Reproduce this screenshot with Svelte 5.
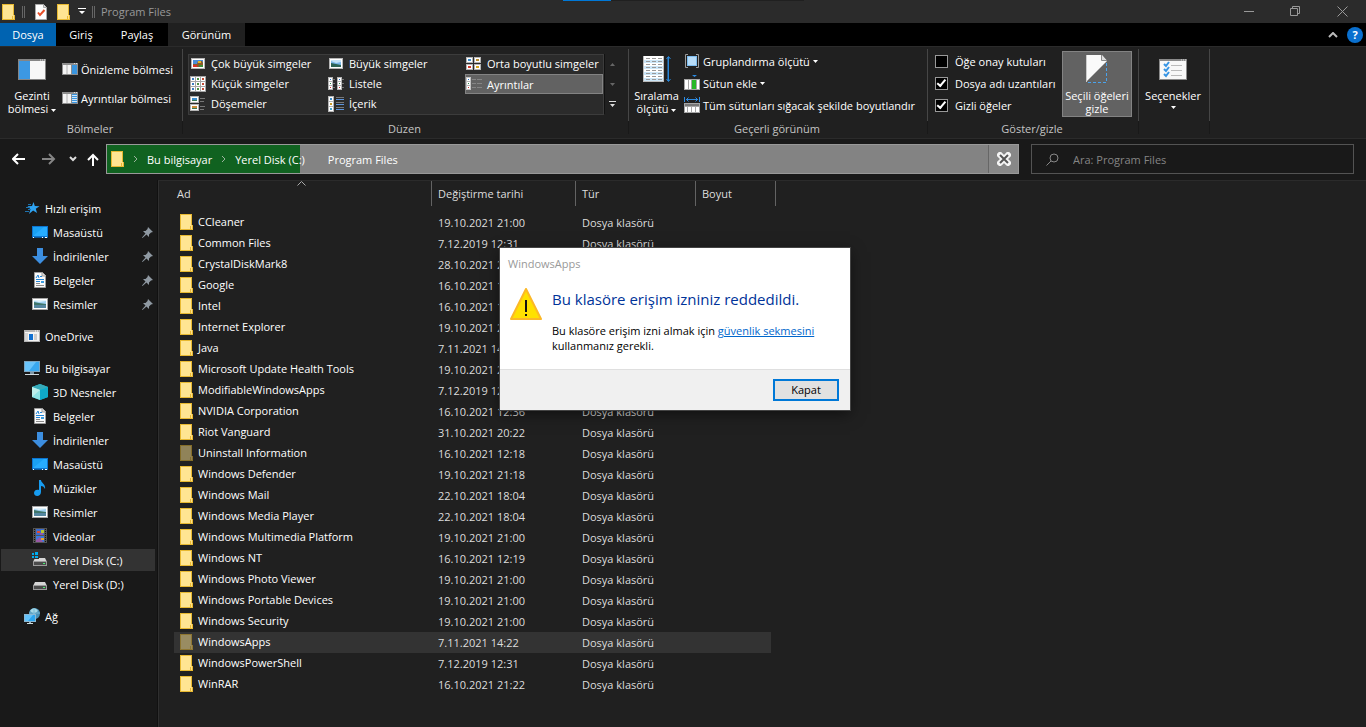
<script>
    let itemChecks = $state(false);
    let extensions = $state(true);
    let hiddenItems = $state(true);
    let progress = $state(21.2);
    let search = $state('');

    const layouts = [
        { icon: 'xlarge', label: 'Çok büyük simgeler' },
        { icon: 'large', label: 'Büyük simgeler' },
        { icon: 'medium', label: 'Orta boyutlu simgeler' },
        { icon: 'small', label: 'Küçük simgeler' },
        { icon: 'list', label: 'Listele' },
        { icon: 'details', label: 'Ayrıntılar', active: true },
        { icon: 'tiles', label: 'Döşemeler' },
        { icon: 'content', label: 'İçerik' }
    ];

    const tree = [
        [
            { icon: 'star', label: 'Hızlı erişim', root: true },
            { icon: 'desktop', label: 'Masaüstü', pin: true },
            { icon: 'download', label: 'İndirilenler', pin: true },
            { icon: 'document', label: 'Belgeler', pin: true },
            { icon: 'picture', label: 'Resimler', pin: true }
        ],
        [{ icon: 'onedrive', label: 'OneDrive', root: true }],
        [
            { icon: 'pc', label: 'Bu bilgisayar', root: true },
            { icon: 'cube', label: '3D Nesneler' },
            { icon: 'document', label: 'Belgeler' },
            { icon: 'download', label: 'İndirilenler' },
            { icon: 'desktop', label: 'Masaüstü' },
            { icon: 'music', label: 'Müzikler' },
            { icon: 'picture', label: 'Resimler' },
            { icon: 'video', label: 'Videolar' },
            { icon: 'diskc', label: 'Yerel Disk (C:)', selected: true },
            { icon: 'diskd', label: 'Yerel Disk (D:)' }
        ],
        [{ icon: 'network', label: 'Ağ', root: true }]
    ];

    const files = [
        { name: 'CCleaner', date: '19.10.2021 21:00' },
        { name: 'Common Files', date: '7.12.2019 12:31' },
        { name: 'CrystalDiskMark8', date: '28.10.2021 21:03' },
        { name: 'Google', date: '16.10.2021 12:46' },
        { name: 'Intel', date: '16.10.2021 12:31' },
        { name: 'Internet Explorer', date: '19.10.2021 21:18' },
        { name: 'Java', date: '7.11.2021 14:10' },
        { name: 'Microsoft Update Health Tools', date: '19.10.2021 20:44' },
        { name: 'ModifiableWindowsApps', date: '7.12.2019 12:14' },
        { name: 'NVIDIA Corporation', date: '16.10.2021 12:36' },
        { name: 'Riot Vanguard', date: '31.10.2021 20:22' },
        { name: 'Uninstall Information', date: '16.10.2021 12:18', hidden: true },
        { name: 'Windows Defender', date: '19.10.2021 21:18' },
        { name: 'Windows Mail', date: '22.10.2021 18:04' },
        { name: 'Windows Media Player', date: '22.10.2021 18:04' },
        { name: 'Windows Multimedia Platform', date: '19.10.2021 21:00' },
        { name: 'Windows NT', date: '16.10.2021 12:19' },
        { name: 'Windows Photo Viewer', date: '19.10.2021 21:00' },
        { name: 'Windows Portable Devices', date: '19.10.2021 21:00' },
        { name: 'Windows Security', date: '19.10.2021 21:00' },
        { name: 'WindowsApps', date: '7.11.2021 14:22', hidden: true, selected: true },
        { name: 'WindowsPowerShell', date: '7.12.2019 12:31' },
        { name: 'WinRAR', date: '16.10.2021 21:22' }
    ];
</script>

{#snippet folder()}
    <svg class="folder" width="14" height="16" viewBox="0 0 14 16" aria-hidden="true">
        <path d="M0 0h12v11h1v5H0z" fill="#e8b931" />
        <path d="M1 1h10v14H1z" fill="#ffe592" />
        <path d="M11 11h1v4h-2v-3z" fill="#ffe08a" />
        <path d="M10.5 12v3" stroke="#e8b931" />
    </svg>
{/snippet}

{#snippet arrow()}
    <svg class="caret" width="5" height="3" viewBox="0 0 5 3" aria-hidden="true"><path d="M0 0h5L2.5 3z" fill="currentColor" /></svg>
{/snippet}

{#snippet thumb(x, y, c)}
    <rect {x} {y} width="5" height="5" fill="#fff" stroke="#a5a5a5" />
    <rect x={x + 1.5} y={y + 1.5} width="2" height="2" fill={c} />
{/snippet}

{#snippet icon(name)}
    <svg width="16" height="16" viewBox="0 0 16 16" aria-hidden="true">
        {#if name === 'xlarge'}
            <rect x="1.5" y="2.5" width="13" height="10" fill="#fff" stroke="#b5b5b5" />
            <path d="M3 4h10v7H3z" fill="#4c8fd8" />
            <path d="M3 8h4l1-3h4l1 2v4H3z" fill="#8a5a28" />
            <path d="M3 9h4v2H3z" fill="#d93025" /><path d="M8 5h3v2H8z" fill="#e6b422" /><path d="M9 9h4v2H9z" fill="#3d8b37" />
        {:else if name === 'large'}
            <rect x="1.5" y="2.5" width="13" height="10" fill="#fff" stroke="#b5b5b5" />
            <path d="M3 4h10v7H3z" fill="#79b6ea" /><path d="M3 4h10v2L8 7 3 5z" fill="#c6e4f7" />
            <path d="M3 7l5 1 5 1v2H3z" fill="#2b6456" />
        {:else if name === 'medium'}
            {#each [[0, 1, '#3c8fd0'], [8, 1, '#b98f32'], [0, 8, '#d53a2b'], [8, 8, '#d6a51d']] as [x, y, c]}
                <rect x={x + 0.5} y={y + 0.5} width="6" height="5" fill="#fff" stroke="#b5b5b5" />
                <rect x={x + 2} y={y + 2} width="3" height="2" fill={c} />
            {/each}
        {:else if name === 'small'}
            {#each [0, 5, 10] as y}
                {@render thumb(0.5, y + 0.5, '#3c7cc0')}
                {@render thumb(5.5, y + 0.5, '#4b8f43')}
                {@render thumb(10.5, y + 0.5, '#c04b35')}
            {/each}
        {:else if name === 'list'}
            {#each [0, 9] as x}
                <rect x={x + 0.5} y="1.5" width="4" height="12" fill="#fff" stroke="#b5b5b5" />
                <path d="M{x + 1} 5.5h3M{x + 1} 9.5h3" stroke="#b5b5b5" />
                <path d="M{x + 2} 3h1v1h-1z" fill="#2975c9" /><path d="M{x + 2} 7h1v1h-1z" fill="#2b8547" /><path d="M{x + 2} 11h1v1h-1z" fill="#cf3030" />
                <path d="M{x + 5} 3.5h2M{x + 5} 7.5h2M{x + 5} 11.5h2" stroke="#777" />
            {/each}
        {:else if name === 'details'}
            <rect x="0.5" y="1.5" width="4" height="12" fill="#fff" stroke="#c4c4c4" />
            <path d="M1 5.5h3M1 9.5h3" stroke="#b5b5b5" />
            <path d="M2 3h1v1H2z" fill="#2975c9" /><path d="M2 7h1v1H2z" fill="#2b8547" /><path d="M2 11h1v1H2z" fill="#cf3030" />
            <path d="M6 3.5h4m1 0h5M6 7.5h4m1 0h5M6 11.5h4m1 0h5" stroke="#858585" />
        {:else if name === 'tiles'}
            {#each [[0, '#3f8fcd'], [8, '#c98b39']] as [y, c]}
                <rect x="0.5" y={y + 0.5} width="8" height="6" fill="#fff" stroke="#b5b5b5" />
                <rect x="2" y={y + 2} width="5" height="3" fill={c} /><rect x="2" y={y + 4} width="5" height="1" fill="#3a7a54" />
                <path d="M10 {y + 2.5}h5M10 {y + 5.5}h4" stroke="#777" />
            {/each}
        {:else if name === 'content'}
            {#each [[0, '#3f8fcd'], [5, '#c9992a'], [10, '#4aa2cb']] as [y, c]}
                <rect x="0.5" y={y + 0.5} width="5" height="5" fill="#fff" stroke="#b5b5b5" />
                <rect x="2" y={y + 2} width="2" height="2" fill={c} />
                <path d="M8 {y + 1.5}h8" stroke="#777" /><path d="M8 {y + 3.5}h8" stroke="#5b93dc" />
            {/each}
        {:else if name === 'preview' || name === 'detailpane'}
            <path d="M0 2h16v12H0z" fill="#8d8d8d" /><path d="M1 4h8v9H1z" fill="#f4f4f4" />
            <path d="M5 4v9" stroke="#b0b0b0" />
            <path d="M10 4h5v9h-5z" fill="#3995df" />
            <path d="M12 2.5h1m1 0h1" stroke="#ddd" />
            {#if name === 'detailpane'}<path d="M10 5.5h5M10 7.5h5M10 9.5h5M10 11.5h5" stroke="#cfe7fb" />{/if}
        {:else if name === 'group'}
            <path d="M4 1.5H1.5v13H4M12 1.5h2.5v13H12" fill="none" stroke="#9b9b9b" />
            <rect x="3.5" y="3.5" width="9" height="9" fill="#b7dcf8" stroke="#7dbcef" />
        {:else if name === 'addcol'}
            <path d="M8 0h5l-2.5 2z" fill="#2d8be0" />
            <path d="M0 4h16v11H0z" fill="#a6a6a6" /><path d="M1 5h3v9H1zM5 5h2v9H5zM13 5h2v9h-2z" fill="#fff" /><path d="M8 5h4v9H8z" fill="#28b828" />
        {:else if name === 'fit'}
            <path d="M.5 0v5M15.5 0v5M2 2.5h12M4.500 .5l-2 2 2 2M11.500 .5l2 2-2 2" fill="none" stroke="#2d8be0" />
            <path d="M0 6h16v10H0z" fill="#a6a6a6" />
            <path d="M1 8h14" stroke="#777" stroke-width="2" /><path d="M1 10h2v5H1zM4 10h3v5H4zM8 10h3v5H8zM12 10h3v5h-3z" fill="#fff" />
        {:else if name === 'star'}
            <path d="M9.500 2l1.300 4 4.700.2-3.700 2.600L13 13l-3.900-2.400L5 14l1.500-4.800L3.500 6.200 8 6z" fill="#2ea3f2" />
            <path d="M4 4.500h3M2 7.500h4M4 9.500h3M1 11.500h4" stroke="#1d73b0" />
        {:else if name === 'desktop'}
            <path d="M0 2h16v12H0z" fill="#0d74cf" /><path d="M1 3h14v9H1z" fill="#1aa1f4" /><path d="M1 12L12 3h3v9z" fill="#27acff" />
            <path d="M0 13.5h16" stroke="#0a5596" /><path d="M1 13.5h1m8 0h1m2 0h2" stroke="#fff" />
        {:else if name === 'download'}
            <path d="M5 0h6v8h5l-8 8-8-8h5z" fill="#3c8ee0" />
        {:else if name === 'document'}
            <path d="M2.5.5h8l3 3v12h-11z" fill="#fafafa" stroke="#9d9d9d" /><path d="M10 .5v3.500h4" fill="#ddd" stroke="#9d9d9d" />
            <path d="M4 6l2-3 1 3M8 4.500h2M4 7.500h8M4 9.500h4" stroke="#2185d8" fill="none" /><path d="M9 9h3v2H9z" fill="#3a9ce0" /><path d="M4 11.500h4M4 13.500h8" stroke="#8a8a8a" />
        {:else if name === 'picture'}
            <path d="M0 2h16v12H0z" fill="#a5a5a5" /><path d="M1 3h14v10H1z" fill="#fff" />
            <path d="M2 4h12v8H2z" fill="#9fd1f1" /><path d="M2 6l5 1 7 1v2H2z" fill="#40766b" /><path d="M2 9h12v3H2z" fill="#5587a1" /><path d="M2 4h12v1L7 6 2 5z" fill="#e3f3fb" />
        {:else if name === 'onedrive'}
            <path d="M0 2h16v12H0z" fill="#b5b5b5" /><path d="M1 4h14v9H1z" fill="#f4f4f4" /><path d="M5 6h4v6H5z" fill="#0f6fd0" /><path d="M10 7h3M10 9h3M10 11h3" stroke="#a5a5a5" /><path d="M1 5h3v8H1z" fill="#d5d5d5" /><path d="M11 3h1m1 0h1" stroke="#fff" />
        {:else if name === 'pc'}
            <path d="M0 1h16v11H0z" fill="#7da5c0" /><path d="M1 2h14v9H1z" fill="#39a8f0" /><path d="M1 2h11L5 11H1z" fill="#69c4fb" />
            <path d="M6 12h4v2H6z" fill="#7c95a5" /><path d="M1 14.500h14" stroke="#cfd9df" />
        {:else if name === 'cube'}
            <path d="M8 0l8 3v10l-8 3-8-3V3z" fill="#22bbd0" /><path d="M8 0l8 3-8 3-8-3z" fill="#36aab9" /><path d="M0 3l8 3v10l-8-3z" fill="#8ee3e4" /><path d="M8 6l8-3v10l-8 3z" fill="#0fa9c8" /><path d="M0 3l8 3-8 7z" fill="#bdeeea" />
        {:else if name === 'music'}
            <path d="M7 0h2c0 3 5 4 4 9-1-2-2-3-4-3v6c0 5-7 5-7 1 0-3 3-4 5-3z" fill="#179cf0" />
        {:else if name === 'video'}
            <path d="M1 0h14v15H1z" fill="#555" /><path d="M4 1h8v6H4z" fill="#3a6cd0" /><path d="M4 8h8v6H4z" fill="#3a79dc" />
            <path d="M5 3h3v2H5z" fill="#e04a30" /><path d="M9 2h3v3H9z" fill="#b9c630" /><path d="M8 5h3v2H8zM4 12l4-3 3 5H4z" fill="#9858a5" /><path d="M9 10h3v2H9z" fill="#e5a42f" />
            <path d="M2.500 1v13M13.500 1v13" stroke="#111" stroke-dasharray="1 1" />
        {:else if name === 'diskc' || name === 'diskd'}
            <path d="M3 6h10l2 4H1z" fill="#d5d5d5" /><path d="M1 9h14v5H1z" fill="#9a9a9a" /><path d="M2 10h12v3H2z" fill="#4a4a4a" /><path d="M11 11.500h2" stroke="#48f070" />
            {#if name === 'diskc'}<path d="M0 0h7v7H0z" fill="#333" /><path d="M0 1h2v2H0zM3 0h3v3H3zM0 4h2v2H0zM3 4h3v2H3z" fill="#00adef" />{/if}
        {:else if name === 'network'}
            <circle cx="10.500" cy="5.500" r="5.500" fill="#4a92b8" /><path d="M6 3c3-4 6-3 8 0L10 6z" fill="#a6d8e7" /><path d="M10 0v11M5 5h11" stroke="#79b8d4" />
            <path d="M0 6h12v8H0z" fill="#8ab8d4" /><path d="M1 7h10v6H1z" fill="#2ba4ee" /><path d="M1 7h8l-5 6H1z" fill="#63c2fa" /><path d="M5 14h2v1H5z" fill="#9ab" /><path d="M3 15.500h6" stroke="#cdd" />
        {/if}
    </svg>
{/snippet}

<div class="window">
    <header class="titlebar">
        {@render folder()}
        <span class="grip"></span>
        <svg class="props" width="12" height="16" viewBox="0 0 12 16" aria-hidden="true">
            <path d="M.5.5h8l3 3v12H.5z" fill="#fff" stroke="#aaa" /><path d="M8.500.5v3h3" fill="#ddd" stroke="#aaa" />
            <path d="M3 8.500l2 2.500 4.500-5" fill="none" stroke="#e8502a" stroke-width="2" />
        </svg>
        {@render folder()}
        <svg class="quick" width="8" height="7" viewBox="0 0 8 7" aria-hidden="true"><path d="M0 0h8v1H0zM1 3h6L4 6z" fill="#fff" /></svg>
        <span class="grip"></span>
        <h1>Program Files</h1>
        <div class="loading"></div>
        <div class="controls">
            <button aria-label="Simge durumuna küçült"><svg width="11" height="11" viewBox="0 0 11 11"><path d="M0 5.500h10" stroke="#999" /></svg></button>
            <button aria-label="Önceki boyut"><svg width="11" height="11" viewBox="0 0 11 11"><path d="M.5 2.500h7v7h-7zM2.500 2.500v-2h7v7h-2" fill="none" stroke="#999" /></svg></button>
            <button aria-label="Kapat"><svg width="11" height="11" viewBox="0 0 11 11"><path d="M.5.5l10 10m0-10l-10 10" stroke="#999" /></svg></button>
        </div>
    </header>

    <nav class="tabs">
        <button class="file">Dosya</button>
        <button>Giriş</button>
        <button>Paylaş</button>
        <button class="current">Görünüm</button>
        <div class="tabs-end">
            <button aria-label="Şeridi küçült"><svg width="10" height="6" viewBox="0 0 10 6"><path d="M1 5l4-4 4 4" fill="none" stroke="#bbb" stroke-width="2" /></svg></button>
            <button class="help" aria-label="Yardım">?</button>
        </div>
    </nav>

    <section class="ribbon">
        <div class="group panes">
            <div class="tools">
                <button class="big">
                    <svg width="28" height="28" viewBox="0 0 28 28" aria-hidden="true">
                        <path d="M0 4h28v21H0z" fill="#858585" /><path d="M1 6h26v18H1z" fill="#f7f7f7" /><path d="M1 6h11v18H1z" fill="#3c98e3" /><path d="M22 5h1m1 0h1m1 0h1" stroke="#ddd" />
                    </svg>
                    <span>Gezinti<br />bölmesi {@render arrow()}</span>
                </button>
                <div class="pane-list">
                    <button class="tool">{@render icon('preview')}Önizleme bölmesi</button>
                    <button class="tool">{@render icon('detailpane')}Ayrıntılar bölmesi</button>
                </div>
            </div>
            <div class="caption">Bölmeler</div>
        </div>

        <div class="group layout">
            <div class="tools">
                <div class="gallery">
                    {#each layouts as item}
                        <button class:active={item.active}>{@render icon(item.icon)}{item.label}</button>
                    {/each}
                </div>
                <div class="scroller">
                    <button aria-label="Yukarı"><svg width="5" height="3" viewBox="0 0 5 3"><path d="M0 3h5L2.500 0z" fill="#666" /></svg></button>
                    <button aria-label="Aşağı"><svg width="5" height="3" viewBox="0 0 5 3"><path d="M0 0h5L2.500 3z" fill="#666" /></svg></button>
                    <button aria-label="Diğer"><svg width="7" height="6" viewBox="0 0 7 6"><path d="M0 0h7v1H0zM1 3h5L3.500 6z" fill="#ddd" /></svg></button>
                </div>
            </div>
            <div class="caption">Düzen</div>
        </div>

        <div class="group view">
            <div class="tools">
                <button class="big">
                    <svg width="28" height="28" viewBox="0 0 28 28" aria-hidden="true">
                        <path d="M0 1h21v26H0z" fill="#fff" />
                        <path d="M0 5h21v3H0zM0 11h21v3H0zM0 17h21v3H0zM0 23h21v3H0z" fill="#cbe6f8" />
                        <path d="M.5 1v26M20.500 1v26M0 26.500h21" stroke="#bbb" />
                        <path d="M3 3.500h16M3 6.500h16M3 9.500h16M3 12.500h16M3 15.500h16M3 18.500h16M3 21.500h16M3 24.500h16" stroke="#999" stroke-dasharray="4 2" />
                        <path d="M25.500 2v24M23.500 4l2-2.500 2 2.500M23.500 24l2 2.500 2-2.500" fill="none" stroke="#2785d8" />
                        <path d="M25 2v24" stroke="#2785d8" />
                    </svg>
                    <span>Sıralama<br />ölçütü {@render arrow()}</span>
                </button>
                <div class="rows">
                    <button class="tool">{@render icon('group')}Gruplandırma ölçütü {@render arrow()}</button>
                    <button class="tool">{@render icon('addcol')}Sütun ekle {@render arrow()}</button>
                    <button class="tool">{@render icon('fit')}Tüm sütunları sığacak şekilde boyutlandır</button>
                </div>
            </div>
            <div class="caption">Geçerli görünüm</div>
        </div>

        <div class="group showhide">
            <div class="tools">
                <div class="rows">
                    <label><input type="checkbox" bind:checked={itemChecks} />Öğe onay kutuları</label>
                    <label><input type="checkbox" bind:checked={extensions} />Dosya adı uzantıları</label>
                    <label><input type="checkbox" bind:checked={hiddenItems} />Gizli öğeler</label>
                </div>
                <button class="big pressed">
                    <svg width="28" height="28" viewBox="0 0 28 28" aria-hidden="true">
                        <path d="M3 0h16l5 6L3 27z" fill="#fafafa" /><path d="M18.500 0v5.500H24" fill="#ddd" stroke="#8b8b8b" /><path d="M3.500 0v27" stroke="#ccc" />
                        <path d="M23.500 8v19.500H4" fill="none" stroke="#4aa3ec" stroke-dasharray="3 2" />
                    </svg>
                    <span>Seçili öğeleri<br />gizle</span>
                </button>
            </div>
            <div class="caption">Göster/gizle</div>
        </div>

        <div class="group options">
            <div class="tools">
                <button class="big">
                    <svg width="28" height="28" viewBox="0 0 28 28" aria-hidden="true">
                        <path d="M0 4h28v21H0z" fill="#8b8b8b" /><path d="M1 6h26v18H1z" fill="#f8f8f8" /><path d="M22 5h1m1 0h1m1 0h1" stroke="#ddd" />
                        <path d="M5 9l2 2 3-4M5 14l2 2 3-4M5 19l2 2 3-4" fill="none" stroke="#3594e4" stroke-width="2" /><path d="M12 10.500h11M12 15.500h11M12 20.500h11" stroke="#bbb" />
                    </svg>
                    <span>Seçenekler<br />{@render arrow()}</span>
                </button>
            </div>
        </div>
    </section>

    <section class="navbar">
        <div class="history">
            <button aria-label="Geri"><svg width="14" height="12" viewBox="0 0 14 12"><path d="M13 6H1M6 1L1 6l5 5" fill="none" stroke="#fff" stroke-width="2" /></svg></button>
            <button aria-label="İleri"><svg width="14" height="12" viewBox="0 0 14 12"><path d="M0 6h12M7 1l5 5-5 5" fill="none" stroke="#858585" stroke-width="2" /></svg></button>
            <button class="recent" aria-label="Son konumlar"><svg width="8" height="6" viewBox="0 0 8 6"><path d="M1 1l3 3 3-3" fill="none" stroke="#ddd" stroke-width="2" /></svg></button>
            <button aria-label="Yukarı"><svg width="12" height="13" viewBox="0 0 12 13"><path d="M6 13V2M1 7l5-5 5 5" fill="none" stroke="#fff" stroke-width="2" /></svg></button>
        </div>
        <div class="address">
            <span class="progress" style="width: {progress}%"></span>
            <div class="crumbs">
                {@render folder()}
                <svg width="5" height="8" viewBox="0 0 5 8" aria-hidden="true"><path d="M1 1l3 3-3 3" fill="none" stroke="#9bb49d" /></svg>
                <a href="#pc">Bu bilgisayar</a>
                <svg width="5" height="8" viewBox="0 0 5 8" aria-hidden="true"><path d="M1 1l3 3-3 3" fill="none" stroke="#9bb49d" /></svg>
                <a class="drive" href="#c">Yerel Disk (C:)</a>
                <a href="#program-files">Program Files</a>
            </div>
            <button class="stop" aria-label="Durdur">
                <svg width="14" height="14" viewBox="0 0 14 14"><path d="M3 3l8 8M11 3l-8 8" stroke="#f4f4f4" stroke-width="6" stroke-linecap="round" /><path d="M3 3l8 8M11 3l-8 8" stroke="#555" stroke-width="2" /></svg>
            </button>
        </div>
        <label class="search">
            <svg width="13" height="13" viewBox="0 0 13 13" aria-hidden="true"><circle cx="8" cy="5" r="4" fill="none" stroke="#888" /><path d="M5 8l-4.500 4.500" stroke="#888" /></svg>
            <input type="text" placeholder="Ara: Program Files" aria-label="Ara: Program Files" bind:value={search} />
        </label>
    </section>

    <main>
        <aside>
            {#each tree as section}
                <ul>
                    {#each section as node}
                        <li class:root={node.root} class:selected={node.selected}>
                            {@render icon(node.icon)}
                            <span>{node.label}</span>
                            {#if node.pin}
                                <svg class="pin" width="11" height="11" viewBox="0 0 11 11" aria-hidden="true"><path d="M6 0l5 5-2 .5-2 2L7 10 4.500 7.500.500 11 0 10.500 3.500 6.500 1 4l2.500 0 2-2z" fill="#8f99a2" /></svg>
                            {/if}
                        </li>
                    {/each}
                </ul>
            {/each}
        </aside>

        <section class="files">
            <svg class="sort" width="9" height="5" viewBox="0 0 9 5" aria-hidden="true"><path d="M.5 4.500l4-4 4 4" fill="none" stroke="#aaa" /></svg>
            <table>
                <thead>
                    <tr>
                        <th class="name"><span>Ad</span></th>
                        <th class="date"><span>Değiştirme tarihi</span></th>
                        <th class="type"><span>Tür</span></th>
                        <th class="size"><span>Boyut</span></th>
                    </tr>
                </thead>
                <tbody>
                    {#each files as file}
                        <tr class:selected={file.selected} class:hidden={file.hidden}>
                            <td class="name">{@render folder()}{file.name}</td>
                            <td>{file.date}</td>
                            <td>Dosya klasörü</td>
                            <td class="last"></td>
                        </tr>
                    {/each}
                </tbody>
            </table>
        </section>
    </main>

    <div class="dialog" role="alertdialog" aria-labelledby="dialog-title">
        <div class="dialog-body">
            <div class="dialog-caption">WindowsApps</div>
            <div class="message">
                <svg width="32" height="32" viewBox="0 0 32 32" aria-hidden="true">
                    <path d="M16 1l15 30H1z" fill="#ffe100" stroke="#fcb827" stroke-width="2" stroke-linejoin="round" />
                    <path d="M15 12h2v12h-2zM15 26h2v2h-2z" fill="#111" />
                </svg>
                <div>
                    <h2 id="dialog-title">Bu klasöre erişim izniniz reddedildi.</h2>
                    <p>Bu klasöre erişim izni almak için <a href="#security">güvenlik sekmesini</a> kullanmanız gerekli.</p>
                </div>
            </div>
        </div>
        <div class="dialog-footer"><button>Kapat</button></div>
    </div>
</div>

<style>
    :global(body) { background: #202020; }
    .window { position: relative; display: flex; flex-direction: column; min-height: 100vh; overflow: hidden; font-family: "Open Sans", "Noto Sans", sans-serif; font-size: 11px; line-height: 15px; color: #fff; }
    button { font: inherit; color: inherit; background: none; border: 0; padding: 0; margin: 0; white-space: nowrap; }
    svg { flex: none; display: block; }
    h1, h2, p, ul { margin: 0; padding: 0; font-weight: normal; }
    a { color: inherit; text-decoration: none; }

    .titlebar { position: relative; display: flex; align-items: center; height: 23px; padding-left: 2px; background: #2b2b2b; }
    .grip { width: 1px; height: 12px; border: 1px solid #666; border-width: 0 1px; margin: 0 10px 0 6px; }
    .props { margin-right: 10px; }
    .quick { margin-left: 7px; }
    .titlebar .quick + .grip { margin-right: 6px; }
    h1 { font-size: 11px; color: #999; }
    .loading { position: absolute; top: 0; left: 563px; width: 241px; height: 1px; background: linear-gradient(to right, #0078d7 48px, #202020 48px); }
    .controls { display: flex; margin-left: auto; }
    .controls button { width: 46px; height: 20px; display: grid; place-items: center; }
    .controls button:last-child { width: 48px; }

    .tabs { display: flex; height: 23px; background: #000; }
    .tabs button { width: 56px; }
    .tabs .file { background: #0063b1; }
    .tabs .current { width: 77px; background: #202020; }
    .tabs > button:nth-child(2) { width: 50px; }
    .tabs > button:nth-child(3) { width: 62px; }
    .tabs-end { display: flex; align-items: center; gap: 9px; margin-left: auto; padding-right: 3px; }
    .tabs-end button { width: auto; }
    .tabs-end .help { width: 16px; height: 16px; border-radius: 8px; background: #0a70cf; font-weight: bold; line-height: 16px; }

    .ribbon { display: flex; height: 91px; border-top: 1px solid #2b2b2b; border-bottom: 1px solid #2b2b2b; background: #202020; }
    .group { position: relative; box-sizing: border-box; padding-top: 2px; }
    .group::after { content: ""; position: absolute; right: 0; top: 2px; width: 1px; height: 85px; background: linear-gradient(#464646 72px, #191919 72px); }
    .panes { width: 183px; }
    .layout { width: 446px; }
    .view { width: 299px; }
    .showhide { width: 211px; }
    .options { width: 71px; }
    .tools { display: flex; height: 73px; }
    .caption { padding-right: 3px; text-align: center; color: #c4c4c4; line-height: 14px; }
    .big { display: flex; flex-direction: column; align-items: center; line-height: 13px; padding-top: 6px; }
    .big span { margin-top: 6px; }
    .caret { display: inline-block; vertical-align: middle; }
    .tool { display: flex; align-items: center; gap: 3px; height: 22px; }
    .panes .tools { padding-left: 8px; gap: 6px; }
    .panes .big { width: 48px; }
    .pane-list { display: flex; flex-direction: column; gap: 7px; padding-top: 9px; }
    .layout .tools { padding: 5px 0 0 5px; box-sizing: border-box; }
    .gallery { display: grid; grid-template-columns: repeat(3, 138px); grid-auto-rows: 20px; width: 416px; height: 60px; border: 1px solid #3c3c3c; border-bottom: 0; box-shadow: 0 1px #3c3c3c; background: #2b2b2b; box-sizing: border-box; align-content: end; }
    .gallery button { display: flex; align-items: center; gap: 5px; padding-bottom: 1px; border: 1px solid transparent; }
    .gallery .active { padding-bottom: 0; background: #626262; border-color: #838383; }
    .scroller { display: flex; flex-direction: column; width: 14px; height: 60px; border-left: 1px solid #111; }
    .scroller button { flex: 1; display: grid; place-items: center; }
    .view .tools { padding-left: 4px; gap: 4px; }
    .view .big { width: 47px; }
    .rows { display: flex; flex-direction: column; padding-top: 1px; }
    .showhide .tools { padding-left: 7px; }
    .showhide .rows { width: 127px; }
    .showhide label { display: flex; align-items: center; gap: 7px; height: 22px; white-space: nowrap; }
    input[type="checkbox"] { appearance: none; flex: none; width: 13px; height: 13px; margin: 0; background: #000; border: 1px solid #999; display: grid; place-items: center; }
    input[type="checkbox"]:checked::before { content: ""; width: 3px; height: 7px; border: solid #fff; border-width: 0 2px 2px 0; transform: rotate(40deg) translate(-1px, -1px); }
    .pressed { width: 70px; height: 66px; box-sizing: border-box; margin-top: 2px; padding-top: 3px; background: #626262; border: 1px solid #838383; }
    .options .big { width: 68px; }
    .options .caret { margin: 4px auto 0; display: block; }

    .navbar { display: flex; align-items: center; gap: 12px; padding: 5px 12px 6px; background: #191919; }
    .history { display: flex; align-items: center; width: 82px; gap: 16px; }
    .history .recent { margin-right: -6px; margin-left: -3px; }
    .address { position: relative; flex: 1; display: flex; box-sizing: border-box; height: 30px; border: 1px solid #999; background: #838383; }
    .progress { position: absolute; left: 0; top: 0; bottom: 0; background: #106220; }
    .crumbs { position: relative; flex: 1; display: flex; align-items: center; gap: 9px; padding-left: 4px; }
    .crumbs .folder { margin-right: -1px; }
    .drive { margin-right: 14px; }
    .stop { width: 30px; display: grid; place-items: center; border-left: 1px solid #666; background: #888; }
    .search { display: flex; align-items: center; gap: 14px; box-sizing: border-box; width: 323px; height: 30px; padding-left: 14px; border: 1px solid #535353; }
    .search input { flex: 1; font: inherit; color: #fff; background: none; border: 0; outline: 0; padding: 0; }
    .search input::placeholder { color: #858585; opacity: 1; }

    main { display: flex; flex: 1; }
    aside { width: 157px; padding-top: 17px; background: #191919; border-right: 1px solid #111; }
    ul { list-style: none; padding-bottom: 8px; }
    li { display: flex; align-items: center; gap: 5px; height: 22px; margin: 0 2px 2px 1px; padding-left: 31px; }
    li.root { padding-left: 23px; }
    li.selected { background: #333; }
    .pin { margin: 0 2px 0 auto; }
    .files { position: relative; flex: 1; background: #202020; padding-left: 15px; border-top: 1px solid #2b2b2b; border-left: 1px solid #2f2f2f; }
    .sort { position: absolute; left: 138px; top: 0; }
    table { border-collapse: separate; border-spacing: 0; table-layout: fixed; width: 602px; }
    th { padding: 0; height: 31px; vertical-align: top; font-weight: normal; text-align: left; color: #ddd; }
    th span { display: block; height: 25px; line-height: 25px; padding-left: 6px; border-right: 1px solid #636363; }
    th.name span { padding-left: 3px; }
    th.name { width: 258px; }
    th.date { width: 144px; }
    th.type { width: 120px; }
    th.size { width: 80px; }
    td { height: 21px; padding: 0 0 0 6px; box-sizing: border-box; line-height: 20px; color: #ddd; white-space: nowrap; }
    td.name { display: flex; align-items: center; padding-bottom: 1px; color: #fff; gap: 4px; }
    .selected td { background: #333 padding-box; }
    td.last { border-right: 5px solid transparent; }
    .hidden .folder { opacity: 0.5; }

    .dialog { position: absolute; left: 500px; top: 248px; width: 350px; background: #fff; color: #000; box-shadow: 0 0 0 1px #444, 0 4px 14px rgba(0, 0, 0, 0.5); }
    .dialog-body { height: 121px; }
    .dialog-caption { padding: 8px; color: #999; }
    .message { display: flex; gap: 10px; padding: 9px 10px 0; }
    h2 { font-size: 15px; line-height: 22px; color: #003399; white-space: nowrap; }
    .message p { margin-top: 13px; }
    .message p a { color: #0066cc; text-decoration: underline; }
    .dialog-footer { display: flex; justify-content: flex-end; padding: 9px 11px; border-top: 1px solid #dfdfdf; background: #f0f0f0; }
    .dialog-footer button { width: 66px; height: 22px; border: 2px solid #0078d7; background: #e1e1e1; line-height: 16px; }
</style>
